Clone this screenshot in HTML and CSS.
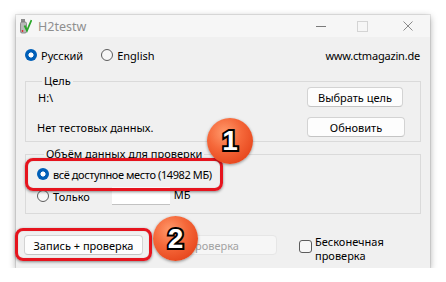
FILE: index.html
```html
<!DOCTYPE html>
<html lang="ru">
<head>
<meta charset="utf-8">
<title>H2testw</title>
<link rel="stylesheet" href="styles.css">
</head>
<body>
<div class="window">
  <div class="titlebar">
    <svg class="appicon" width="12" height="16" viewBox="0 0 12 16">
      <rect x="1" y="1" width="4" height="3" fill="#8a8a8a"/>
      <rect x="0.5" y="4" width="6" height="11" rx="1.5" fill="#b9b9b9" stroke="#7a7a7a" stroke-width="0.8"/>
      <circle cx="2.5" cy="13" r="0.9" fill="#d22"/>
      <path d="M4.5 7.5 L7 12.5 L11.5 2" fill="none" stroke="#2aa82a" stroke-width="1.8"/>
    </svg>
    <span class="title">H2testw</span>
    <div class="controls">
      <span class="ctl min"></span>
      <span class="ctl max"></span>
      <svg class="ctl close" width="10" height="10" viewBox="0 0 10 10"><path d="M0.5 0.5 L9.5 9.5 M9.5 0.5 L0.5 9.5" stroke="#8a8a8a" stroke-width="1"/></svg>
    </div>
  </div>
  <div class="content">
    <div class="langrow">
      <label class="opt"><span class="rb on"></span>Русский</label>
      <label class="opt opt-en"><span class="rb"></span>English</label>
      <span class="site">www.ctmagazin.de</span>
    </div>
    <fieldset class="group g1">
      <legend>Цель</legend>
      <div class="g1-grid">
        <span class="path">H:\</span><button class="btn b-sel">Выбрать цель</button>
        <span>Нет тестовых данных.</span><button class="btn b-upd">Обновить</button>
      </div>
    </fieldset>
    <fieldset class="group g2">
      <legend>Объём данных для проверки</legend>
      <label class="opt row1"><span class="rb on"></span><span class="all">всё доступное место (14982 МБ)</span></label>
      <div class="row2">
        <label class="opt"><span class="rb"></span>Только</label>
        <span class="numbox"></span>
        <span class="unit">МБ</span>
      </div>
    </fieldset>
    <div class="bottom">
      <button class="btn b-write">Запись + проверка</button>
      <button class="btn b-check" disabled>Проверка</button>
      <label class="chk"><span class="cb"></span><span class="chk-text"><span class="ln">Бесконечная</span><span class="ln">проверка</span></span></label>
    </div>
  </div>
  <div class="hl hl1"></div>
  <div class="hl hl2"></div>
  <div class="badge badge1">1</div>
  <div class="badge badge2">2</div>
</div>
</body>
</html>
```
FILE: styles.css
```css
html, body {
  margin: 0;
  padding: 0;
  background: #ffffff;
}
body {
  font-family: "Noto Sans", "Open Sans", sans-serif;
  font-size: 11px;
  color: #000;
}
.window {
  position: relative;
  margin: 15px 0 0 16px;
  width: 414px;
  height: 253px;
  background: #f0f0f0;
  box-shadow: 0 2px 7px rgba(0,0,0,0.35), 0 0 0 1px rgba(0,0,0,0.08);
}
.titlebar {
  height: 22px;
  background: #f6f6f6;
  display: flex;
  align-items: center;
}
.appicon {
  margin-left: 4px;
}
.title {
  margin-left: 6px;
  font-size: 12.5px;
  color: #8f8f8f;
}
.controls {
  margin-left: auto;
  display: flex;
  align-items: center;
  height: 22px;
}
.ctl {
  display: block;
}
.min {
  width: 10px;
  height: 1px;
  background: #7a7a7a;
  margin-right: 31px;
}
.max {
  width: 9px;
  height: 9px;
  border: 1px solid #d4d4d4;
  margin-right: 35px;
}
.close {
  margin-right: 17px;
}
.content {
  padding: 0 9px;
}
.langrow {
  margin-top: 10px;
  height: 16px;
  display: flex;
  align-items: center;
}
.opt {
  display: flex;
  align-items: center;
  white-space: nowrap;
}
.opt-en {
  margin-left: 18px;
}
.site {
  margin-left: auto;
  margin-right: 1px;
  letter-spacing: -0.2px;
}
.rb {
  box-sizing: border-box;
  width: 12px;
  height: 12px;
  border-radius: 50%;
  border: 1px solid #5c5c5c;
  background: #f7f7f7;
  margin-right: 4px;
  flex: none;
}
.rb.on {
  border: none;
  background: radial-gradient(circle, #ffffff 0 2.3px, #005fb8 2.8px);
}
.group {
  margin: 0;
  padding: 0;
  min-width: 0;
  border: 1px solid #dadada;
  border-radius: 0;
}
.group legend {
  padding: 0 2px;
  margin-left: 5px;
  line-height: 16px;
}
.g1 {
  margin-top: 10px;
  height: 69px;
  box-sizing: border-box;
  padding: 0 15px 0 11px;
}
.g1-grid {
  margin-top: -2px;
  display: grid;
  grid-template-columns: 1fr auto;
  grid-template-rows: 20px 20px;
  row-gap: 10px;
  align-items: center;
}
.path {
  margin-left: 1px;
}
.btn {
  font-family: inherit;
  font-size: 11px;
  color: #000;
  background: #fdfdfd;
  border: 1px solid #d3d3d3;
  border-bottom-color: #c4c4c4;
  border-radius: 4px;
  padding: 0;
  height: 20px;
  box-sizing: border-box;
}
.b-sel {
  width: 96px;
  margin-right: 2px;
}
.b-upd {
  width: 98px;
}
.g2 {
  margin-top: 4px;
  height: 68px;
  box-sizing: border-box;
  padding: 0 0 0 11px;
}
.g2 legend {
  margin-left: 7px;
}
.row1 {
  margin-top: 4px;
  height: 16px;
}
.all {
  letter-spacing: -0.4px;
}
.row2 {
  margin-top: 5px;
  display: flex;
  align-items: center;
  height: 18px;
}
.numbox {
  width: 58px;
  height: 18px;
  background: #ffffff;
  border-bottom: 1px solid #c2c2c2;
  margin-left: 22px;
  box-sizing: border-box;
}
.unit {
  margin-left: 4px;
  align-self: flex-start;
  margin-top: 0;
}
.bottom {
  margin-top: 21px;
  display: flex;
  align-items: flex-start;
  height: 24px;
}
.b-write {
  width: 119px;
  margin-left: -1px;
}
.b-check {
  width: 96px;
  margin-left: 38px;
  background: #f6f6f6;
  border-color: #e6e6e6;
  color: #a3a3a3;
  text-align: left;
  padding-left: 5px;
}
.chk {
  margin-left: 22px;
  display: flex;
  align-items: flex-start;
  margin-top: 4px;
}
.cb {
  box-sizing: border-box;
  width: 13px;
  height: 13px;
  border: 1px solid #5c5c5c;
  border-radius: 3px;
  background: #f7f7f7;
  margin-top: 1px;
  margin-right: 3px;
  flex: none;
}
.chk-text {
  display: flex;
  flex-direction: column;
  margin-top: -4px;
}
.ln {
  line-height: 14px;
  height: 14px;
}
.hl {
  position: absolute;
  box-sizing: border-box;
  border: 3px solid #e6141e;
  border-radius: 8px;
  box-shadow: 0 1px 3px rgba(0,0,0,0.45), inset 0 0 1px rgba(0,0,0,0.3);
}
.hl1 {
  left: 9px;
  top: 143px;
  width: 198px;
  height: 33px;
}
.hl2 {
  left: -1px;
  top: 213px;
  width: 137px;
  height: 33px;
}
.badge {
  position: absolute;
  width: 46px;
  height: 46px;
  border-radius: 50%;
  background: radial-gradient(circle at 38% 32%, #ff9a6c 0%, #f5683a 40%, #e84a20 75%, #c8371a 100%);
  box-shadow: 0 1px 3px rgba(0,0,0,0.4);
  display: flex;
  align-items: center;
  justify-content: center;
  font-family: "Liberation Sans", Arial, sans-serif;
  font-weight: bold;
  font-size: 28px;
  color: #ffffff;
  -webkit-text-stroke: 4px #000;
  paint-order: stroke fill;
  line-height: 1;
}
.badge1 {
  left: 191px;
  top: 103px;
}
.badge2 {
  left: 137px;
  top: 201px;
  width: 45px;
  height: 45px;
}
```
